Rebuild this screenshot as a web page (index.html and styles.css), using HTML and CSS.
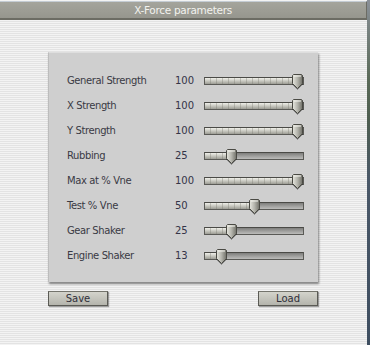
FILE: index.html
```html
<!DOCTYPE html>
<html lang="en">
<head>
    <meta charset="UTF-8">
    <title>X-Force parameters</title>
    <link rel="stylesheet" href="styles.css">
</head>
<body>
    <div class="window">
        <div class="titlebar">X-Force parameters</div>

        <div class="panel">
            <div class="row">
                <span class="label">General Strength</span>
                <span class="value">100</span>
                <div class="slider"><div class="fill" style="width: 93px"></div><svg class="thumb" style="left: 87px" viewBox="0 0 11 15"><use href="#thumb"/></svg></div>
            </div>
            <div class="row">
                <span class="label">X Strength</span>
                <span class="value">100</span>
                <div class="slider"><div class="fill" style="width: 93px"></div><svg class="thumb" style="left: 87px" viewBox="0 0 11 15"><use href="#thumb"/></svg></div>
            </div>
            <div class="row">
                <span class="label">Y Strength</span>
                <span class="value">100</span>
                <div class="slider"><div class="fill" style="width: 93px"></div><svg class="thumb" style="left: 87px" viewBox="0 0 11 15"><use href="#thumb"/></svg></div>
            </div>
            <div class="row">
                <span class="label">Rubbing</span>
                <span class="value">25</span>
                <div class="slider"><div class="fill" style="width: 26px"></div><svg class="thumb" style="left: 21px" viewBox="0 0 11 15"><use href="#thumb"/></svg></div>
            </div>
            <div class="row">
                <span class="label">Max at % Vne</span>
                <span class="value">100</span>
                <div class="slider"><div class="fill" style="width: 93px"></div><svg class="thumb" style="left: 87px" viewBox="0 0 11 15"><use href="#thumb"/></svg></div>
            </div>
            <div class="row">
                <span class="label">Test % Vne</span>
                <span class="value">50</span>
                <div class="slider"><div class="fill" style="width: 49px"></div><svg class="thumb" style="left: 44px" viewBox="0 0 11 15"><use href="#thumb"/></svg></div>
            </div>
            <div class="row">
                <span class="label">Gear Shaker</span>
                <span class="value">25</span>
                <div class="slider"><div class="fill" style="width: 26px"></div><svg class="thumb" style="left: 21px" viewBox="0 0 11 15"><use href="#thumb"/></svg></div>
            </div>
            <div class="row">
                <span class="label">Engine Shaker</span>
                <span class="value">13</span>
                <div class="slider"><div class="fill" style="width: 16px"></div><svg class="thumb" style="left: 11px" viewBox="0 0 11 15"><use href="#thumb"/></svg></div>
            </div>
        </div>

        <div class="buttons">
            <button type="button">Save</button>
            <button type="button">Load</button>
        </div>
    </div>
    <div class="edge"></div>

    <!-- shared slider knob -->
    <svg width="0" height="0" class="defs">
        <defs>
            <linearGradient id="knob" x1="0" y1="0" x2="1" y2="0">
                <stop offset="0" stop-color="#e8e8e0"/>
                <stop offset="0.5" stop-color="#b4b4ac"/>
                <stop offset="1" stop-color="#707068"/>
            </linearGradient>
            <symbol id="thumb" viewBox="0 0 11 15">
                <path d="M1.5 0.5 H9.5 L10.5 1.5 V9.5 L5.5 14.5 L0.5 9.5 V1.5 Z" fill="url(#knob)" stroke="#4a4a44" stroke-width="1"/>
                <path d="M2 2 H9" stroke="#fafaf4" stroke-width="1"/>
            </symbol>
        </defs>
    </svg>
</body>
</html>
```

FILE: styles.css
```css
/* Page */
body {
    margin: 0;
    width: 370px;
    height: 345px;
    overflow: hidden;
    display: flex;
    font-family: "DejaVu Sans", sans-serif;
    background: repeating-linear-gradient(to bottom, #f3f3f3 0, #f3f3f3 1px, #e3e3e3 1px, #e3e3e3 2px);
}

.window {
    width: 367px;
    display: flex;
    flex-direction: column;
}

.edge {
    width: 3px;
    background: linear-gradient(to bottom, #8a9098 0, #5a6a58 80px, #4e5e50 120px, #4a5868 180px, #3e4e60 100%);
}

.defs {
    position: absolute;
}

/* Title */
.titlebar {
    height: 16px;
    margin-top: 1px;
    border-top: 1px solid #c4ccd4;
    border-bottom: 2px solid #6c6c64;
    border-right: 1px solid #6c6c64;
    background: linear-gradient(to bottom, #a4a49c, #96968e);
    color: #f2f2ee;
    font-size: 10.5px;
    letter-spacing: -0.3px;
    line-height: 16px;
    text-align: center;
}

/* Parameter panel */
.panel {
    margin: 32px 0 0 48px;
    width: 270px;
    height: 230px;
    box-sizing: border-box;
    padding: 15px 0 0 18px;
    background: #cfcfcf;
    border-top: 1px solid #dedede;
    border-left: 1px solid #bcbcbc;
    box-shadow: 1px 2px 2px rgba(0, 0, 0, 0.45);
}

.row {
    height: 25px;
    display: flex;
    align-items: center;
    font-size: 10px;
    color: #3a3a44;
}

.label {
    width: 108px;
    letter-spacing: -0.4px;
}

.value {
    width: 29px;
    color: #343448;
}

.slider {
    position: relative;
    width: 100px;
    height: 8px;
    box-sizing: border-box;
    border: 1px solid #5a5a56;
    border-top-color: #4a4a46;
    background: linear-gradient(to bottom, #7e7e7c, #a4a4a2 60%, #bcbcba);
}

.fill {
    height: 100%;
    background:
        repeating-linear-gradient(to right, transparent 0, transparent 5px, rgba(120, 120, 110, 0.35) 5px, rgba(120, 120, 110, 0.35) 6px),
        linear-gradient(to bottom, #f0f0ea, #c8c8c0 50%, #9c9c94);
}

.thumb {
    position: absolute;
    top: -4px;
    width: 11px;
    height: 15px;
    filter: drop-shadow(0 1px 0.5px rgba(0, 0, 0, 0.35));
}

/* Buttons */
.buttons {
    width: 270px;
    margin: 9px 0 0 48px;
    display: flex;
    justify-content: space-between;
}

button {
    width: 60px;
    height: 15px;
    padding: 0;
    font-family: "DejaVu Sans", sans-serif;
    font-size: 10px;
    color: #30303a;
    background: linear-gradient(to bottom, #d4d4cc, #b4b4ac);
    border: 1px solid #5a5a54;
    border-top-color: #74746c;
    box-shadow: 1px 1px 1px rgba(0, 0, 0, 0.35);
    line-height: 12px;
}
```
